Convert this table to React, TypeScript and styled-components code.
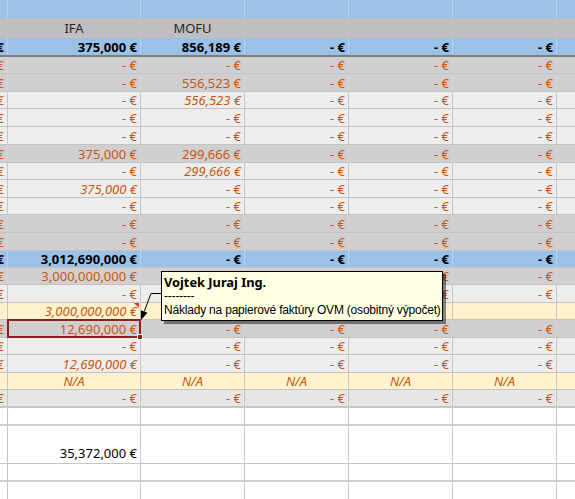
import React from "react";
import styled, { createGlobalStyle, css } from "styled-components";

const GlobalStyle = createGlobalStyle`
  html, body { margin: 0; padding: 0; background: #ffffff; }
  body { overflow: hidden; }
`;

const BLUE = "#9bc2e6";
const HEAD = "#bfbfbf";
const GRAY = "#d0cece";
const LIGHT = "#ededed";
const YELLOW = "#fff2cc";
const SOFT = "#e7e6e6";
const WHITE = "#ffffff";
const ORANGE = "#c65911";
const SEL = "#8b2020";

const COLS = [8, 133, 104, 104, 104, 104, 18];

type Tone = "orange" | "bold" | "black" | "header";

type CellData = {
  t?: string;
  tone?: Tone;
  it?: boolean;
  center?: boolean;
  sel?: boolean;
  note?: boolean;
  bottom?: boolean;
};

type RowData = {
  h: number;
  bg: string;
  bb: string;
  vline: string;
  cells: CellData[];
};

const Sheet = styled.div`
  position: relative;
  width: 575px;
  height: 499px;
  overflow: hidden;
  background: #ffffff;
  display: flex;
  flex-direction: column;
  font-family: "Noto Sans", "Open Sans", sans-serif;
  font-size: 13px;
`;

const Row = styled.div<{ $h: number; $bg: string; $bb: string }>`
  display: flex;
  flex: none;
  box-sizing: border-box;
  height: ${(p) => p.$h}px;
  background: ${(p) => p.$bg};
  border-bottom: ${(p) => p.$bb};
`;

const toneCss = {
  orange: css`color: ${ORANGE}; font-weight: 400;`,
  bold: css`color: #000000; font-weight: 700;`,
  black: css`color: #000000; font-weight: 400;`,
  header: css`color: #262626; font-weight: 400;`,
};

const selCss = css`
  overflow: visible;
  z-index: 2;
  &::after {
    content: "";
    position: absolute;
    left: -1px;
    top: -1px;
    right: -1px;
    bottom: -1px;
    border: 2px solid ${SEL};
    pointer-events: none;
  }
  &::before {
    content: "";
    position: absolute;
    right: -3px;
    bottom: -3px;
    width: 4px;
    height: 4px;
    background: ${SEL};
    border: 1px solid #ffffff;
    z-index: 1;
  }
`;

const noteCss = css`
  &::after {
    content: "";
    position: absolute;
    right: 1px;
    top: 0;
    width: 0;
    height: 0;
    border-top: 5px solid #d04040;
    border-left: 5px solid transparent;
  }
`;

const Cell = styled.div<{
  $w: number;
  $vline: string;
  $tone: Tone;
  $it: boolean;
  $center: boolean;
  $bottom: boolean;
  $last: boolean;
  $sel: boolean;
  $note: boolean;
}>`
  position: relative;
  flex: none;
  box-sizing: border-box;
  width: ${(p) => p.$w}px;
  height: 100%;
  border-right: ${(p) => (p.$last ? "none" : `1px solid ${p.$vline}`)};
  padding: ${(p) => (p.$bottom ? "0 3px 2px 3px" : "0 3px")};
  display: flex;
  align-items: ${(p) => (p.$bottom ? "flex-end" : "center")};
  justify-content: ${(p) => (p.$center ? "center" : "flex-end")};
  overflow: hidden;
  white-space: nowrap;
  line-height: 16px;
  font-style: ${(p) => (p.$it ? "italic" : "normal")};
  ${(p) => toneCss[p.$tone]}
  ${(p) => p.$sel && selCss}
  ${(p) => p.$note && noteCss}
`;

const Comment = styled.div`
  position: absolute;
  z-index: 3;
  left: 161px;
  top: 271px;
  width: 282px;
  height: 50px;
  box-sizing: border-box;
  padding: 3px 2px 0 2px;
  background: #ffffe1;
  border: 1px solid #000000;
  box-shadow: 3px 3px 0 rgba(0, 0, 0, 0.45);
  display: flex;
  flex-direction: column;
  font-family: "Liberation Sans", Arial, sans-serif;
  font-size: 12px;
  line-height: 14px;
  color: #000000;
  white-space: nowrap;
  overflow: hidden;
`;

const Author = styled.div`
  font-family: "Noto Sans", "Open Sans", sans-serif;
  font-size: 12.8px;
  font-weight: 700;
`;

const Line = styled.div`
  letter-spacing: -0.2px;
`;

const Arrow = styled.svg`
  position: absolute;
  z-index: 3;
  left: 138px;
  top: 288px;
  overflow: visible;
`;

const dash: CellData = { t: "- €", tone: "orange" };
const o = (t: string, it = false): CellData => ({ t, tone: "orange", it });
const b = (t: string): CellData => ({ t, tone: "bold" });
const bd: CellData = { t: "- €", tone: "bold" };
const na: CellData = { t: "N/A", tone: "orange", it: true, center: true };

const LINE = "1px solid #c3c3c3";
const VL = "#c6c6c6";
const VG = "#d6d6d6";
const VB = "#b9d1e9";

const dataRow = (h: number, bg: string, c1: CellData, c2: CellData, bb = LINE): RowData => ({
  h,
  bg,
  bb,
  vline: bg === GRAY ? VG : VL,
  cells: [dash, c1, c2, dash, dash, dash, {}],
});

const rows: RowData[] = [
  { h: 18, bg: BLUE, bb: "none", vline: VB, cells: [] },
  {
    h: 20,
    bg: HEAD,
    bb: "none",
    vline: HEAD,
    cells: [{}, { t: "IFA", tone: "header", center: true }, { t: "MOFU", tone: "header", center: true }],
  },
  {
    h: 19,
    bg: BLUE,
    bb: "2px solid #7f7f7f",
    vline: VB,
    cells: [bd, b("375,000 €"), b("856,189 €"), bd, bd, bd, {}],
  },
  dataRow(17, GRAY, dash, dash),
  dataRow(18, GRAY, dash, o("556,523 €")),
  dataRow(17, LIGHT, dash, o("556,523 €", true)),
  dataRow(18, LIGHT, dash, dash),
  dataRow(18, LIGHT, dash, dash),
  dataRow(18, GRAY, o("375,000 €"), o("299,666 €")),
  dataRow(17, LIGHT, dash, o("299,666 €", true)),
  dataRow(18, LIGHT, o("375,000 €", true), dash),
  dataRow(17, LIGHT, dash, dash),
  dataRow(18, GRAY, dash, dash),
  dataRow(18, GRAY, dash, dash),
  {
    h: 17,
    bg: BLUE,
    bb: LINE,
    vline: VB,
    cells: [bd, b("3,012,690,000 €"), bd, bd, bd, bd, {}],
  },
  dataRow(17, GRAY, o("3,000,000,000 €"), dash),
  dataRow(18, LIGHT, dash, dash),
  {
    h: 17,
    bg: YELLOW,
    bb: LINE,
    vline: VL,
    cells: [{}, { ...o("3,000,000,000 €", true), note: true }, {}, {}, {}, {}, {}],
  },
  dataRow(18, GRAY, { ...o("12,690,000 €"), sel: true }, dash),
  dataRow(17, LIGHT, dash, dash),
  dataRow(18, LIGHT, o("12,690,000 €", true), dash),
  {
    h: 17,
    bg: YELLOW,
    bb: LINE,
    vline: VL,
    cells: [{}, na, na, na, na, na, {}],
  },
  dataRow(18, SOFT, dash, dash, "2px solid #c6c6c6"),
  { h: 18, bg: WHITE, bb: "2px solid #d0d0d0", vline: VL, cells: [] },
  {
    h: 38,
    bg: WHITE,
    bb: "1px solid #c6c6c6",
    vline: VL,
    cells: [{}, { t: "35,372,000 €", tone: "black", bottom: true }],
  },
  { h: 18, bg: WHITE, bb: "2px solid #d0d0d0", vline: VL, cells: [] },
  { h: 18, bg: WHITE, bb: "none", vline: VL, cells: [] },
];

export default function App() {
  return (
    <>
      <GlobalStyle />
      <Sheet>
        {rows.map((r, ri) => (
          <Row key={ri} $h={r.h} $bg={r.bg} $bb={r.bb}>
            {COLS.map((w, ci) => {
              const c = r.cells[ci] || {};
              return (
                <Cell
                  key={ci}
                  $w={w}
                  $vline={r.vline}
                  $tone={c.tone || "orange"}
                  $it={!!c.it}
                  $center={!!c.center}
                  $bottom={!!c.bottom}
                  $last={ci === COLS.length - 1}
                  $sel={!!c.sel}
                  $note={!!c.note}
                >
                  {c.t}
                </Cell>
              );
            })}
          </Row>
        ))}
        <Arrow width="26" height="36" viewBox="0 0 26 36">
          <polyline points="23,5.5 13,5.5 6.2,23.6" fill="none" stroke="#000" strokeWidth="1" />
          <polygon points="3,32 9.5,24.8 2.9,22.3" fill="#000" />
        </Arrow>
        <Comment>
          <Author>Vojtek Juraj Ing.</Author>
          <Line>--------</Line>
          <Line>Náklady na papierové faktúry OVM (osobitný výpočet)</Line>
        </Comment>
      </Sheet>
    </>
  );
}
